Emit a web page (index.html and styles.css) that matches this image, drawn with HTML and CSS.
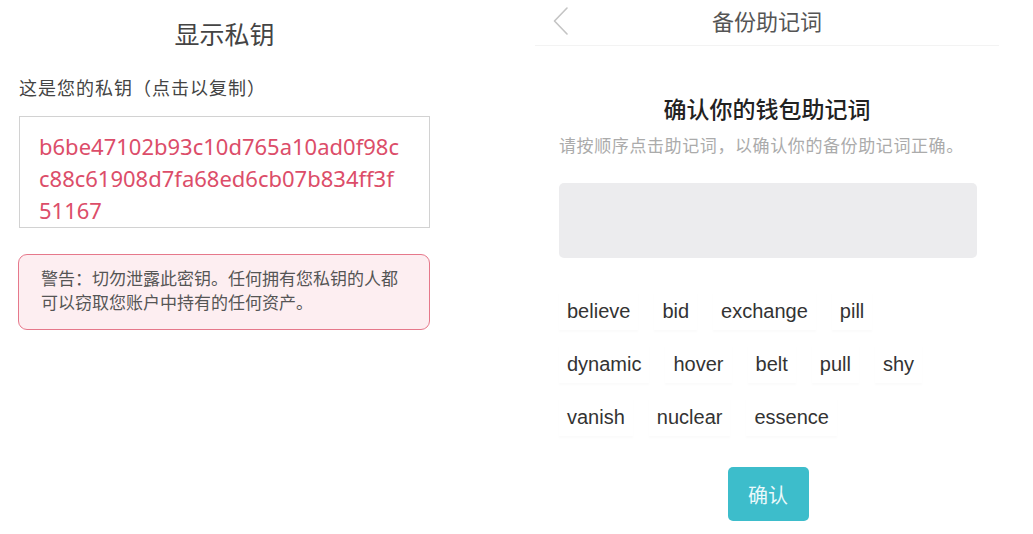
FILE: index.html
```html
<!DOCTYPE html>
<html lang="zh-CN">
<head>
<meta charset="utf-8">
<title>显示私钥 / 备份助记词</title>
<link rel="stylesheet" href="styles.css">
</head>
<body>
<div class="page">
  <section class="left">
    <div class="col">
      <h1 class="ltitle">显示私钥</h1>
      <p class="label">这是您的私钥（点击以复制）</p>
      <div class="keybox">
        <span class="kline">b6be47102b93c10d765a10ad0f98c</span>
        <span class="kline">c88c61908d7fa68ed6cb07b834ff3f</span>
        <span class="kline">51167</span>
      </div>
      <div class="warn">警告：切勿泄露此密钥。任何拥有您私钥的人都可以窃取您账户中持有的任何资产。</div>
    </div>
  </section>
  <section class="right">
    <div class="phone">
      <header class="nav">
        <span class="back">
          <svg width="16" height="28" viewBox="0 0 16 28"><path d="M14 1 L1.5 14 L14 27" fill="none" stroke="#c4c4c4" stroke-width="1.6" stroke-linecap="round" stroke-linejoin="round"/></svg>
        </span>
        <span class="navtitle">备份助记词</span>
        <span></span>
      </header>
      <h2 class="rtitle">确认你的钱包助记词</h2>
      <p class="sub">请按顺序点击助记词，以确认你的备份助记词正确。</p>
      <div class="slot"></div>
      <div class="words">
        <div class="wrow">
          <span class="chip">believe</span>
          <span class="chip">bid</span>
          <span class="chip">exchange</span>
          <span class="chip">pill</span>
        </div>
        <div class="wrow">
          <span class="chip">dynamic</span>
          <span class="chip">hover</span>
          <span class="chip">belt</span>
          <span class="chip">pull</span>
          <span class="chip">shy</span>
        </div>
        <div class="wrow">
          <span class="chip">vanish</span>
          <span class="chip">nuclear</span>
          <span class="chip">essence</span>
        </div>
      </div>
      <div class="btnrow"><button class="confirm">确认</button></div>
    </div>
  </section>
</div>
</body>
</html>
```

FILE: styles.css
```css
* { box-sizing: border-box; }
html, body { margin: 0; padding: 0; background: #fff; }
body {
  font-family: "Noto Sans CJK SC", "Noto Sans", sans-serif;
  width: 1033px;
  height: 534px;
  overflow: hidden;
}
.page { display: flex; }

/* left panel */
.left { width: 520px; padding: 17px 0 0 19px; }
.col { width: 411px; display: flex; flex-direction: column; }
.ltitle {
  margin: 0;
  text-align: center;
  font-size: 25px;
  line-height: 32px;
  font-weight: 400;
  color: #444;
}
.label {
  margin: 27px 0 0;
  font-size: 18px;
  line-height: 22px;
  letter-spacing: 1px;
  color: #444;
}
.keybox {
  margin-top: 18px;
  height: 112px;
  border: 1px solid #d2d2d2;
  padding: 13px 8px 0 19px;
  display: flex;
  flex-direction: column;
}
.kline {
  font-family: "Noto Sans", sans-serif;
  font-size: 22px;
  line-height: 32px;
  color: #dc4d69;
  white-space: nowrap;
}
.warn {
  margin: 26px 0 0 -1px;
  width: 412px;
  height: 76px;
  border: 1.5px solid #e6788b;
  border-radius: 9px;
  background: #fdeef1;
  padding: 11px 20px 0 22px;
  font-size: 17px;
  line-height: 24px;
  color: #555;
}

/* right panel */
.right { width: 513px; }
.phone { margin-left: 15px; width: 464px; display: flex; flex-direction: column; }
.nav {
  height: 46px;
  border-bottom: 1px solid #f3f3f3;
  display: grid;
  grid-template-columns: 60px 1fr 60px;
  align-items: center;
  padding-bottom: 6px;
}
.back { display: flex; padding-left: 18px; padding-top: 2px; }
.navtitle {
  text-align: center;
  font-size: 22px;
  line-height: 28px;
  color: #555;
}
.rtitle {
  margin: 47px 0 0;
  text-align: center;
  font-size: 23px;
  line-height: 30px;
  font-weight: 500;
  color: #222;
}
.sub {
  margin: 10px 0 0;
  padding-left: 24px;
  font-size: 17px;
  line-height: 24px;
  letter-spacing: 0.6px;
  color: #ababab;
  white-space: nowrap;
}
.slot {
  margin: 26px 0 0 24px;
  width: 418px;
  height: 75px;
  border-radius: 5px;
  background: #ececee;
}
.words {
  margin: 34px 0 0 24px;
  display: flex;
  flex-direction: column;
  row-gap: 15px;
}
.wrow { display: flex; column-gap: 16px; }
.chip {
  font-family: "Liberation Sans", "Noto Sans", sans-serif;
  font-size: 20px;
  line-height: 38px;
  height: 38px;
  padding: 0 8px;
  color: #333;
  background: #fff;
  box-shadow: 0 2px 2px rgba(0, 0, 0, 0.02);
}
.btnrow { display: flex; justify-content: center; margin-top: 31px; padding-left: 2px; }
.confirm {
  width: 81px;
  height: 54px;
  border: none;
  border-radius: 5px;
  background: #3dbdcb;
  color: #eaf9fb;
  font-family: "Noto Sans CJK SC", sans-serif;
  font-size: 20px;
  padding: 0;
}
```
